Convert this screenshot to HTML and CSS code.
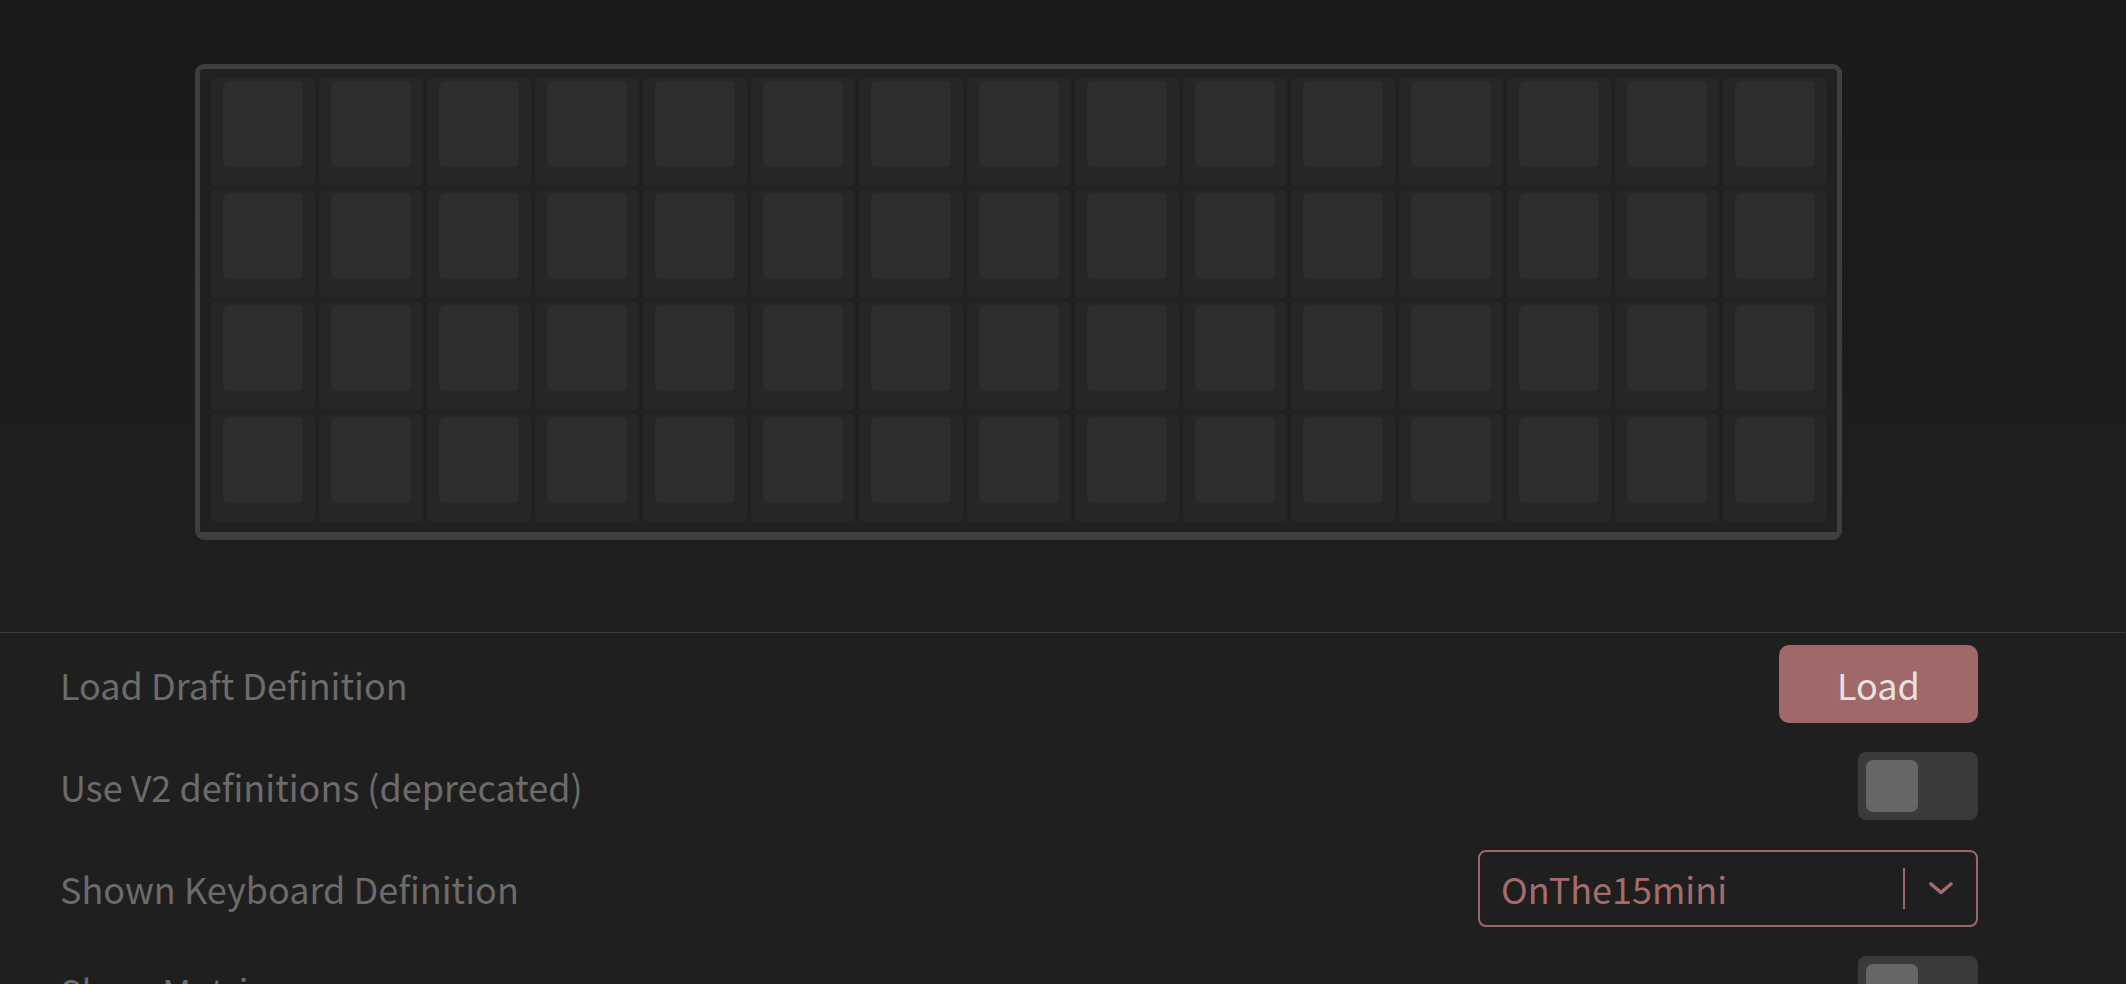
FILE: index.html
```html
<!DOCTYPE html>
<html lang="en">
<head>
<meta charset="utf-8">
<title>Keyboard settings</title>
<link rel="stylesheet" href="styles.css">
</head>
<body>
<div class="preview">
  <div class="board">
    <div class="keys">
      <div class="key"><div class="cap"></div></div><div class="key"><div class="cap"></div></div><div class="key"><div class="cap"></div></div><div class="key"><div class="cap"></div></div><div class="key"><div class="cap"></div></div>
      <div class="key"><div class="cap"></div></div><div class="key"><div class="cap"></div></div><div class="key"><div class="cap"></div></div><div class="key"><div class="cap"></div></div><div class="key"><div class="cap"></div></div>
      <div class="key"><div class="cap"></div></div><div class="key"><div class="cap"></div></div><div class="key"><div class="cap"></div></div><div class="key"><div class="cap"></div></div><div class="key"><div class="cap"></div></div>
      <div class="key"><div class="cap"></div></div><div class="key"><div class="cap"></div></div><div class="key"><div class="cap"></div></div><div class="key"><div class="cap"></div></div><div class="key"><div class="cap"></div></div>
      <div class="key"><div class="cap"></div></div><div class="key"><div class="cap"></div></div><div class="key"><div class="cap"></div></div><div class="key"><div class="cap"></div></div><div class="key"><div class="cap"></div></div>
      <div class="key"><div class="cap"></div></div><div class="key"><div class="cap"></div></div><div class="key"><div class="cap"></div></div><div class="key"><div class="cap"></div></div><div class="key"><div class="cap"></div></div>
      <div class="key"><div class="cap"></div></div><div class="key"><div class="cap"></div></div><div class="key"><div class="cap"></div></div><div class="key"><div class="cap"></div></div><div class="key"><div class="cap"></div></div>
      <div class="key"><div class="cap"></div></div><div class="key"><div class="cap"></div></div><div class="key"><div class="cap"></div></div><div class="key"><div class="cap"></div></div><div class="key"><div class="cap"></div></div>
      <div class="key"><div class="cap"></div></div><div class="key"><div class="cap"></div></div><div class="key"><div class="cap"></div></div><div class="key"><div class="cap"></div></div><div class="key"><div class="cap"></div></div>
      <div class="key"><div class="cap"></div></div><div class="key"><div class="cap"></div></div><div class="key"><div class="cap"></div></div><div class="key"><div class="cap"></div></div><div class="key"><div class="cap"></div></div>
      <div class="key"><div class="cap"></div></div><div class="key"><div class="cap"></div></div><div class="key"><div class="cap"></div></div><div class="key"><div class="cap"></div></div><div class="key"><div class="cap"></div></div>
      <div class="key"><div class="cap"></div></div><div class="key"><div class="cap"></div></div><div class="key"><div class="cap"></div></div><div class="key"><div class="cap"></div></div><div class="key"><div class="cap"></div></div>
    </div>
  </div>
</div>
<div class="settings">
  <div class="row">
    <span class="label">Load Draft Definition</span>
    <button class="btn">Load</button>
  </div>
  <div class="row">
    <span class="label">Use V2 definitions (deprecated)</span>
    <div class="toggle"><div class="knob"></div></div>
  </div>
  <div class="row">
    <span class="label">Shown Keyboard Definition</span>
    <div class="select">
      <span class="select-value">OnThe15mini</span>
      <span class="select-sep"></span>
      <svg class="chevron" width="26" height="16" viewBox="0 0 26 16"><path d="M3 4 L13 12.5 L23 4" fill="none" stroke="currentColor" stroke-width="3.6" stroke-linecap="round" stroke-linejoin="round"/></svg>
    </div>
  </div>
  <div class="row">
    <span class="label">Show Matrix</span>
    <div class="toggle"><div class="knob"></div></div>
  </div>
</div>
</body>
</html>
```

FILE: styles.css
```css
* { box-sizing: border-box; }
html, body { margin: 0; padding: 0; }
body {
  background: #1f1f1f;
  font-family: "Noto Sans CJK JP", "Noto Sans", sans-serif;
  overflow: hidden;
}
.preview {
  height: 632px;
  padding: 64px 0 0 195px;
  background: linear-gradient(#1b1a1b 0%, #1c1c1c 50%, #1f1f1f 100%);
  display: flex;
  align-items: flex-start;
}
.board {
  border: 5px solid #3e3e3e;
  border-bottom-width: 8px;
  border-radius: 9px;
  background: #212121;
  padding: 9px 10px 10px 11px;
}
.keys {
  display: grid;
  grid-template-columns: repeat(15, 104px);
  grid-auto-rows: 108px;
  gap: 4px;
}
.key {
  background: #262626;
  border-radius: 5px;
  padding: 3px 12px 0;
}
.cap {
  height: 86px;
  background: #2f2e2f;
  border-radius: 6px;
}
.settings {
  border-top: 1px solid #3b3b3b;
  padding: 0 148px 0 60px;
}
.row {
  height: 102px;
  display: flex;
  align-items: center;
  justify-content: space-between;
}
.label {
  color: #6b6b6b;
  font-size: 36px;
}
.btn {
  width: 199px;
  height: 78px;
  border: none;
  border-radius: 10px;
  background: #a1686a;
  color: #e9e1e1;
  font-family: inherit;
  font-size: 36px;
  padding: 0;
}
.toggle {
  width: 120px;
  height: 68px;
  border-radius: 8px;
  background: #3a3a3a;
  padding: 8px;
}
.knob {
  width: 52px;
  height: 52px;
  border-radius: 7px;
  background: #666666;
}
.select {
  width: 500px;
  height: 77px;
  border: 2px solid #9e6668;
  border-radius: 8px;
  display: flex;
  align-items: center;
  padding: 0 22px 0 21px;
  color: #a56b6d;
}
.select-value {
  flex: 1;
  font-size: 36px;
}
.select-sep {
  width: 2px;
  height: 41px;
  background: #9e6668;
  margin-right: 23px;
}
.chevron { display: block; }
```
